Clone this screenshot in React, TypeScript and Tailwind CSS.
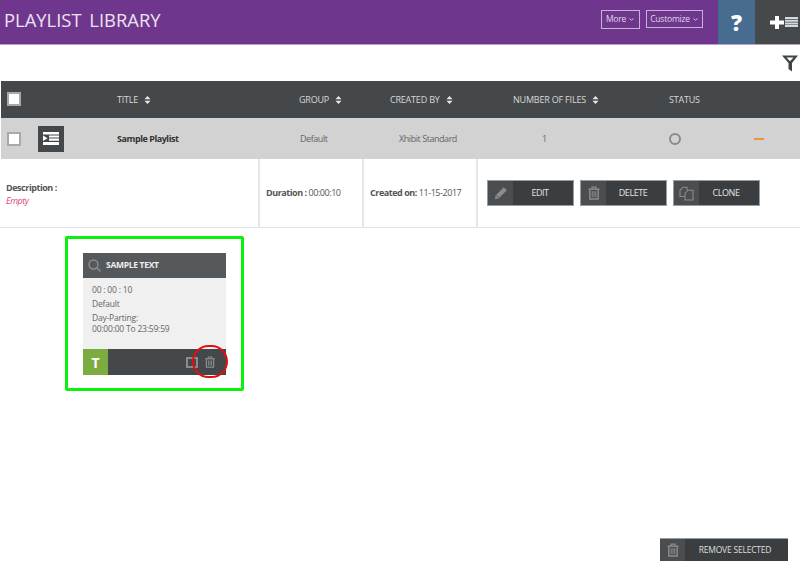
import { ChevronDown } from 'lucide-react';

function SortIcon() {
  return (
    <svg width="7" height="8" viewBox="0 0 7 8" className="ml-[6px] inline-block">
      <path d="M3.5 0 L6.5 3.2 H0.5 Z M3.5 8 L0.5 4.8 H6.5 Z" fill="#e8e8e8" />
    </svg>
  );
}

function TrashIcon({ size = 14, color = '#8a8d8f' }: { size?: number; color?: string }) {
  return (
    <svg width={size} height={size} viewBox="0 0 14 14" fill="none">
      <path d="M1.5 3.2 H12.5" stroke={color} strokeWidth="1.4" />
      <path d="M5 3 V1.2 H9 V3" stroke={color} strokeWidth="1.2" />
      <path d="M2.8 3.4 V13 H11.2 V3.4" stroke={color} strokeWidth="1.4" />
      <path d="M5.2 5.2 V11.2 M7 5.2 V11.2 M8.8 5.2 V11.2" stroke={color} strokeWidth="1" />
    </svg>
  );
}

function PencilIcon() {
  return (
    <svg width="14" height="14" viewBox="0 0 14 14">
      <path d="M0.8 13.2 L1.8 9.2 L9.8 1.2 L12.8 4.2 L4.8 12.2 Z" fill="#8a8d8f" />
      <path d="M2.4 9.4 L4.6 11.6" stroke="#3c4042" strokeWidth="0.7" />
    </svg>
  );
}

function CloneIcon() {
  return (
    <svg width="15" height="15" viewBox="0 0 15 15" fill="none" stroke="#8a8d8f" strokeWidth="1.1">
      <path d="M5.5 10.5 H1 V4.5 L4 1.2 H8 V4" />
      <path d="M6 14 V7.5 L9 4.2 H14 V14 Z" />
    </svg>
  );
}

function ActionButton({ label, icon }: { label: string; icon: React.ReactNode }) {
  return (
    <button className="flex h-[26px] w-[87px] items-stretch border border-[#9a9d9f] bg-[#3a3e40]">
      <span className="flex w-[25px] items-center justify-center bg-[#4a4e50]">{icon}</span>
      <span className="flex-1 pr-[6px] text-center text-[9px] leading-[24px] tracking-[-0.45px] text-[#e4e4e4]">{label}</span>
    </button>
  );
}

export default function App() {
  return (
    <div className="flex h-[561px] flex-col overflow-hidden bg-white font-['Open_Sans',sans-serif] text-[#555]">
      <header className="flex h-[45px] items-stretch border-b border-[#b9a4cb] bg-[#6f368d]">
        <h1 className="flex-1 pl-1 text-[18.4px] leading-[40px] text-[#ece3f2] [word-spacing:3px]">
          PLAYLIST LIBRARY
        </h1>
        <div className="flex items-start gap-[6px] pt-[10px] pr-[15px]">
          <button className="flex h-[19px] w-[39px] items-center justify-center gap-[2px] border border-[#c5b3d3] text-[8.5px] tracking-[-0.2px] text-[#e0d5e8]">
            More <ChevronDown size={7} strokeWidth={3} />
          </button>
          <button className="flex h-[18px] w-[57px] items-center justify-center gap-[2px] border border-[#c5b3d3] text-[8.5px] tracking-[-0.2px] text-[#e0d5e8]">
            Customize <ChevronDown size={7} strokeWidth={3} />
          </button>
        </div>
        <div className="flex w-[37px] items-center justify-center bg-[#486c90] text-[22px] font-extrabold text-white">?</div>
        <div className="flex w-[45px] items-center gap-[1px] bg-[#45494c] pl-[15px]">
          <svg width="14" height="13" viewBox="0 0 14 13" className="shrink-0">
            <path d="M5 0 H9 V4.5 H14 V8.5 H9 V13 H5 V8.5 H0 V4.5 H5 Z" fill="#fff" />
          </svg>
          <svg width="13" height="10" viewBox="0 0 13 10" fill="#d5dade" className="shrink-0">
            <path d="M0 0 H13 V2 H0 Z M0 2.7 H13 V4.7 H0 Z M0 5.4 H13 V7.4 H0 Z M0 8.1 H13 V10 H0 Z" />
          </svg>
        </div>
      </header>

      <div className="flex h-[36px] items-start justify-end pt-[10px] pr-[2px]">
        <svg width="16" height="17" viewBox="0 0 16 17">
          <path
            d="M0 0.5 H16 L10 8 V16.5 L6.5 14 V8 Z M4.5 2.4 L8 6.2 L11.5 2.4 Z"
            fill="#3f4447"
            fillRule="evenodd"
          />
        </svg>
      </div>

      <div className="ml-[1px] grid h-[37px] grid-cols-[116px_182px_91px_123px_156px_1fr] items-center bg-[#44484b] text-[9px] tracking-[-0.2px] text-[#d8d8d8]">
        <div className="pl-[6px]">
          <div className="mb-[2px] h-[14px] w-[14px] border-2 border-[#a9a9a9] bg-white" />
        </div>
        <div>TITLE<SortIcon /></div>
        <div>GROUP<SortIcon /></div>
        <div>CREATED BY<SortIcon /></div>
        <div>NUMBER OF FILES<SortIcon /></div>
        <div>STATUS</div>
      </div>

      <div className="ml-[1px] grid h-[41px] grid-cols-[37px_79px_182px_91px_123px_156px_1fr] items-center bg-[#d2d2d2] text-[9px] tracking-[-0.45px] text-[#666]">
        <div className="pl-[6px]">
          <div className="h-[14px] w-[14px] border-2 border-[#a9a9a9] bg-white" />
        </div>
        <div className="flex h-[26px] w-[26px] items-center justify-center bg-[#44484b]">
          <svg width="16" height="13" viewBox="0 0 16 13" fill="#fff">
            <path d="M0 0 H16 V2.4 H0 Z M6 3.4 H16 V5.6 H6 Z M6 6.6 H16 V8.8 H6 Z M0 10 H16 V13 H0 Z M0 3.6 L4.6 6.3 L0 9 Z" />
          </svg>
        </div>
        <div className="font-bold text-[#333]">Sample Playlist</div>
        <div className="pl-[1px]">Default</div>
        <div className="pl-[9px]">Xhibit Standard</div>
        <div className="pl-[29px]">1</div>
        <div className="flex items-center justify-between pr-[36px]">
          <span className="h-[12px] w-[12px] rounded-full border-2 border-[#8a8a8a]" />
          <span className="h-[2px] w-[10px] bg-[#f0923a]" />
        </div>
      </div>

      <div className="flex h-[69px] items-stretch border-b border-[#e2e2e2] text-[9px] tracking-[-0.45px]">
        <div className="flex w-[260px] flex-col justify-center border-r-2 border-[#e6e6e6] pt-[1px] pl-[6px] leading-[13px]">
          <span className="font-bold">Description :</span>
          <span className="italic text-[#e0457f]">Empty</span>
        </div>
        <div className="flex w-[104px] items-center border-r-2 border-[#e6e6e6] pl-[6px]">
          <span className="font-bold">Duration :&nbsp;</span>00:00:10
        </div>
        <div className="flex w-[114px] items-center border-r-2 border-[#e6e6e6] pl-[6px]">
          <span className="font-bold">Created on:&nbsp;</span>11-15-2017
        </div>
        <div className="flex items-center gap-[6px] pl-[9px]">
          <ActionButton label="EDIT" icon={<PencilIcon />} />
          <ActionButton label="DELETE" icon={<TrashIcon />} />
          <ActionButton label="CLONE" icon={<CloneIcon />} />
        </div>
      </div>

      <div className="flex flex-1 flex-col pt-[8px] pl-[65px]">
        <div className="relative h-[155px] w-[179px] rounded-[2px] border-[3px] border-[#0bf10b] pt-[14px] pl-[15px]">
          <div className="w-[143px]">
            <div className="flex h-[25px] items-center bg-[#55595c] pl-[5px] text-[8.5px] font-bold tracking-[-0.3px] text-[#eee]">
              <svg width="13" height="13" viewBox="0 0 13 13" fill="none" stroke="#8b8f91" strokeWidth="1.4" className="mr-[5px]">
                <circle cx="5.5" cy="5.5" r="4.5" />
                <path d="M9 9 L12.5 12.5" />
              </svg>
              SAMPLE TEXT
            </div>
            <div className="h-[71px] bg-[#f0f0f0] pt-[6px] pl-[9px] text-[8.5px] leading-[11px] tracking-[-0.2px] text-[#666]">
              <p>00 : 00 : 10</p>
              <p className="mt-[3px]">Default</p>
              <p className="mt-[3px]">Day-Parting:</p>
              <p>00:00:00 To 23:59:59</p>
            </div>
            <div className="flex h-[26px] items-center bg-[#44484b]">
              <span className="flex h-full w-[25px] items-center justify-center bg-[#7cac41] text-[14px] font-bold text-white">T</span>
              <span className="ml-auto mr-[10px] flex items-center gap-[6px]">
                <span className="h-[11px] w-[12px] border-2 border-[#8a8d8f]" />
                <TrashIcon size={12} />
              </span>
            </div>
          </div>
          <div className="absolute top-[106px] left-[124px] h-[33px] w-[36px] rounded-full border-[2.5px] border-[#e01010]" />
        </div>
        <div className="mt-auto flex justify-end pr-[12px]">
          <button className="flex h-[23px] w-[128px] items-stretch border-t border-[#9a9d9f] bg-[#3a3e40]">
            <span className="flex w-[25px] items-center justify-center bg-[#4a4e50]">
              <TrashIcon />
            </span>
            <span className="flex-1 pr-[3px] text-center text-[8.5px] leading-[22px] tracking-[-0.2px] text-[#dedede]">REMOVE SELECTED</span>
          </button>
        </div>
      </div>
    </div>
  );
}
